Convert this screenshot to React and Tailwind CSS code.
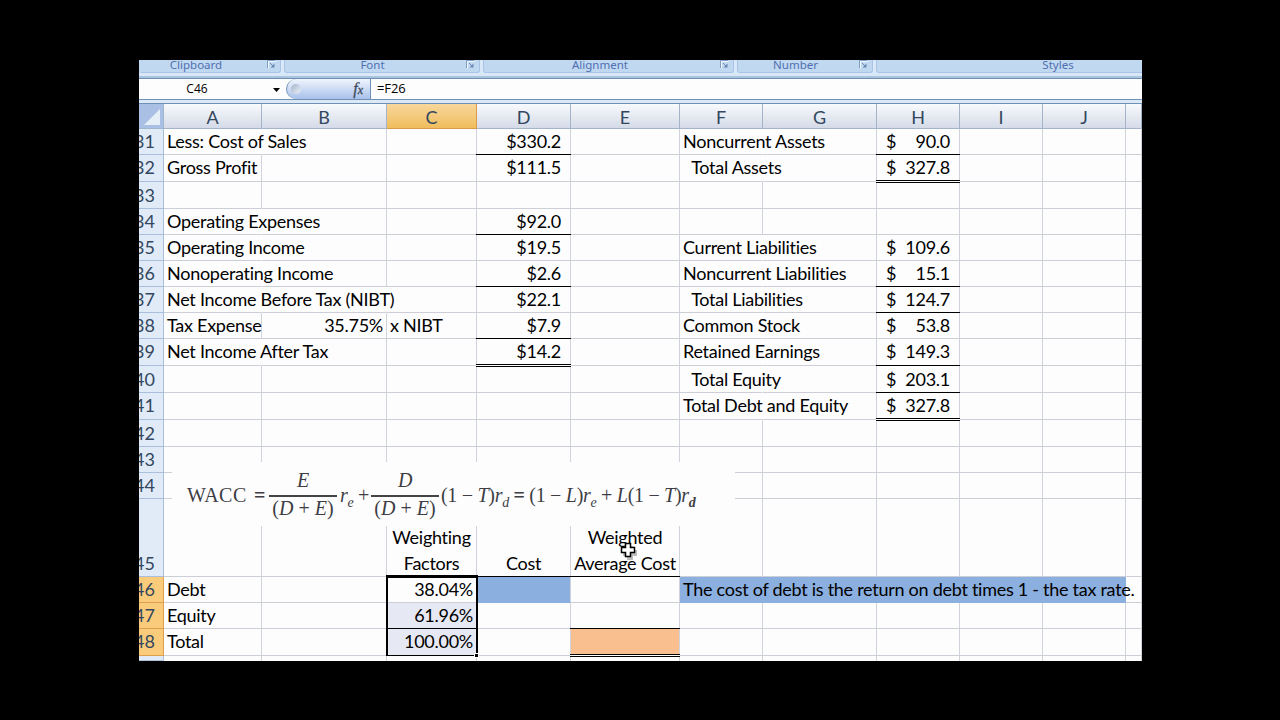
import React from "react";

const COLS = [
  { id: "A", w: "w-[98px]" },
  { id: "B", w: "w-[125px]" },
  { id: "C", w: "w-[90px]" },
  { id: "D", w: "w-[94px]" },
  { id: "E", w: "w-[109px]" },
  { id: "F", w: "w-[83px]" },
  { id: "G", w: "w-[114px]" },
  { id: "H", w: "w-[83px]" },
  { id: "I", w: "w-[83px]" },
  { id: "J", w: "w-[83px]" },
  { id: "K", w: "w-[16px]" },
];

// open: columns whose right gridline is covered by overflowing text
// line / dbl: columns with a single or double bottom border
const ROWS = [
  { n: 31, h: "h-[26px]", open: "AF", line: "DH", A: "Less: Cost of Sales", D: "$330.2", F: "Noncurrent Assets", H: "90.0" },
  { n: 32, h: "h-[27px]", pb: true, open: "F", dbl: "H", A: "Gross Profit", D: "$111.5", F: "  Total Assets", H: "327.8" },
  { n: 33, h: "h-[27px]" },
  { n: 34, h: "h-[26px]", open: "A", line: "D", A: "Operating Expenses", D: "$92.0" },
  { n: 35, h: "h-[26px]", open: "AF", A: "Operating Income", D: "$19.5", F: "Current Liabilities", H: "109.6" },
  { n: 36, h: "h-[26px]", open: "AF", line: "DH", A: "Nonoperating Income", D: "$2.6", F: "Noncurrent Liabilities", H: "15.1" },
  { n: 37, h: "h-[26px]", open: "ABF", line: "H", A: "Net Income Before Tax (NIBT)", D: "$22.1", F: "  Total Liabilities", H: "124.7" },
  { n: 38, h: "h-[26px]", open: "F", line: "D", A: "Tax Expense", B: "35.75%", C: "x NIBT", D: "$7.9", F: "Common Stock", H: "53.8" },
  { n: 39, h: "h-[27px]", pb: true, open: "AF", line: "H", dbl: "D", A: "Net Income After Tax", D: "$14.2", F: "Retained Earnings", H: "149.3" },
  { n: 40, h: "h-[27px]", open: "F", line: "H", F: "  Total Equity", H: "203.1" },
  { n: 41, h: "h-[27px]", pb: true, open: "F", dbl: "H", F: "Total Debt and Equity", H: "327.8" },
  { n: 42, h: "h-[27px]" },
  { n: 43, h: "h-[26px]" },
  { n: 44, h: "h-[26px]" },
  { n: 45, h: "h-[78px]", line: "CDE", C: "Weighting\nFactors", D: "Cost", E: "Weighted\nAverage Cost" },
  { n: 46, h: "h-[26px]", open: "FGHIJ", A: "Debt", C: "38.04%", F: "The cost of debt is the return on debt times 1 - the tax rate." },
  { n: 47, h: "h-[26px]", line: "CE", A: "Equity", C: "61.96%" },
  { n: 48, h: "h-[27px]", pb: true, dbl: "E", A: "Total", C: "100.00%" },
  { n: 49, h: "h-[5px]" },
];

function fillFor(n, col) {
  if (n === 46 && "DFGHIJ".includes(col)) return "bg-[#8bafdf]";
  if (n === 48 && col === "E") return "bg-[#f9bf8f]";
  if ((n === 47 || n === 48) && col === "C") return "bg-[#e6e9f4]";
  return "";
}

function alignFor(n, col) {
  if (n === 45) return "justify-center text-center";
  if (col === "D") return "justify-end pr-[9px]";
  if (col === "B" || (col === "C" && n > 45)) return "justify-end pr-[3px]";
  return "justify-start pl-[3px]";
}

function Cell({ row, col }) {
  const text = row[col.id];
  const has = (key) => (row[key] || "").includes(col.id);
  const rightBorder = has("open") ? "border-r-transparent" : "border-r-[#d0d3dc]";
  const bottom = row.n === 46 && "DFGHIJ".includes(col.id) ? "border-b-[#8bafdf]" : "border-b-[#cdcfd6]";
  const last = row.n === 49 ? "border-b-0" : "border-b";
  const leading = row.n === 45 ? "leading-[26px]" : "leading-[25px]";
  return (
    <div
      className={`relative flex shrink-0 items-end border-r ${last} ${col.w} ${rightBorder} ${bottom} ${fillFor(row.n, col.id)} ${alignFor(row.n, col.id)} ${row.pb ? "pb-px" : ""}`}
    >
      {text && col.id === "H" ? (
        <span className="flex w-full justify-between pl-[6px] pr-[9px] leading-[25px]">
          <span>$</span>
          <span>{text}</span>
        </span>
      ) : (
        text && <span className={`relative z-10 whitespace-pre ${leading}`}>{text}</span>
      )}
      {has("line") && <span className="absolute -left-px right-[-1px] -bottom-px z-10 h-px bg-black" />}
      {has("dbl") && <span className="absolute -left-px right-[-1px] -bottom-[2px] z-10 h-[3px] border-y border-black bg-white" />}
    </div>
  );
}

function Launcher() {
  return (
    <svg width="9" height="9" viewBox="0 0 9 9" fill="none" className="mb-[3px]">
      <path d="M1.5 8.5V1.5H8.5" stroke="#fff" strokeOpacity=".8" />
      <path d="M.5 8V.5H8" stroke="#7d9cc6" />
      <path d="M3 3l3 3" stroke="#6b88b4" />
      <path d="M7.5 3.5v4h-4z" fill="#6b88b4" />
    </svg>
  );
}

function Group({ label, className, launcher, labelClass = "" }) {
  return (
    <div className={`relative flex h-[13px] shrink-0 items-start justify-center rounded-b-[3px] border-x border-b border-[#a9c4e4] bg-[#c1d8f1] ${className}`}>
      <span className={`text-[11.5px] leading-[10px] text-[#4f70b0] ${labelClass}`}>{label}</span>
      {launcher && <span className="absolute bottom-0 right-[4px]"><Launcher /></span>}
    </div>
  );
}

function Ribbon() {
  return (
    <div className="flex h-[16px] gap-[3px] overflow-hidden bg-[#d9e8f8] font-['Noto_Sans']">
      <Group label="Clipboard" className="w-[142px] border-l-0" labelClass="mr-[27px]" launcher />
      <Group label="Font" className="w-[196px]" labelClass="mr-[19px]" launcher />
      <Group label="Alignment" className="w-[251px]" labelClass="mr-[17px]" launcher />
      <Group label="Number" className="w-[136px]" labelClass="mr-[19px]" launcher />
      <Group label="Styles" className="w-[364px]" />
    </div>
  );
}

function FormulaBar() {
  return (
    <div className="flex h-[22px] items-stretch border-y border-[#6f91b5] bg-[#fdfdfe] text-[13px] text-black">
      <div className="relative flex w-[147px] items-center justify-center pr-[31px] font-['Open_Sans']">
        <span className="text-[12px]">C46</span>
        <svg width="7" height="4" viewBox="0 0 7 4" className="absolute right-[6px] top-[9px]">
          <path d="M0 0h7L3.5 4z" fill="#000" />
        </svg>
      </div>
      <div className="flex w-[84px] items-center justify-between rounded-l-full border-l border-[#6f91b5] bg-gradient-to-b from-[#f0f5fd] to-[#a9c1ea] pl-[4px] pr-[7px]">
        <span className="h-[10px] w-[10px] rounded-full bg-gradient-to-br from-[#a3b3c8] to-[#eef3fb]" />
        <span className="font-['Liberation_Serif'] text-[16px] italic leading-none text-[#3e4a5c] [-webkit-text-stroke:0.3px_#3e4a5c]">
          f<span className="text-[12px]">x</span>
        </span>
      </div>
      <div className="flex flex-1 items-center border-l border-[#6f91b5] pl-[6px] font-['Open_Sans'] tracking-[-0.1px]">=F26</div>
    </div>
  );
}

function ColumnHeaders() {
  return (
    <div className="flex h-[25px] shrink-0 text-[18px] text-[#33475e]">
      <div className="flex w-[25px] shrink-0 items-end justify-end border-b border-r border-[#9eb6ce] bg-[#a9c0e4] pb-[3px] pr-[3px]">
        <svg width="16" height="16" viewBox="0 0 16 16"><path d="M16 0v16H0z" fill="#e6eef8" /></svg>
      </div>
      {COLS.map((c) => (
        <div
          key={c.id}
          className={`flex shrink-0 items-center justify-center border-b border-r pt-[3px] ${c.w} ${
            c.id === "C"
              ? "border-[#d99a4a] bg-gradient-to-b from-[#f8d79b] to-[#f0bd5c]"
              : "border-[#a5b3c8] bg-gradient-to-b from-[#f8fafc] to-[#d4dbe8]"
          }`}
        >
          {c.id !== "K" && c.id}
        </div>
      ))}
    </div>
  );
}

function Fraction({ top }) {
  return (
    <span className="flex w-[68px] flex-col items-center">
      <span className="h-[23px] leading-[16px] italic">{top}</span>
      <span className="h-[2px] w-full bg-[#444]" />
      <span className="h-[23px] leading-[23px] tracking-normal">(<i>D</i> + <i>E</i>)</span>
    </span>
  );
}

function Sub({ children }) {
  return <i>r<span className="relative top-[5px] text-[14px]">{children}</span></i>;
}

function Formula() {
  return (
    <div className="absolute left-[33px] top-[402px] z-20 flex h-[64px] w-[563px] items-center whitespace-pre bg-[#fdfdfe] pl-[15px] pt-[4px] font-['Liberation_Serif'] text-[20px] tracking-[-0.3px] text-[#3d3d44]">
      <span className="flex w-[82px] justify-between pb-[3px] pr-[4px]">
        <span className="tracking-[0.5px]">WACC</span>
        <b>=</b>
      </span>
      <Fraction top="E" />
      <span className="w-[34px] pb-[2px] pl-[3px]"><Sub>e</Sub> +</span>
      <Fraction top="D" />
      <span className="pb-[2px] pl-[2px]">
        (1 − <i>T</i>)<Sub>d</Sub> <b>=</b> (1 − <i>L</i>)<Sub>e</Sub> + <i>L</i>(1 − <i>T</i>)<Sub><b>d</b></Sub>
      </span>
    </div>
  );
}

function Sheet() {
  return (
    <div className="font-['Lato'] text-[18px] tracking-[-0.27px] text-black [font-variant-ligatures:none]">
      {ROWS.map((row) => {
        const active = row.n >= 46 && row.n <= 48;
        return (
          <div key={row.n} className={`flex ${row.h}`}>
            <div
              className={`flex w-[25px] shrink-0 items-end justify-end overflow-hidden border-b border-r pr-[8px] tracking-normal text-[#33475e] ${
                active ? "border-[#dfa04d] bg-[#fbcb7c]" : "border-[#a9bfdb] bg-[#e1ebf8]"
              } ${row.pb ? "pb-px" : ""}`}
            >
              {row.n < 49 && <span className="leading-[25px]">{row.n}</span>}
            </div>
            {COLS.map((c) => (
              <Cell key={c.id} row={row} col={c} />
            ))}
          </div>
        );
      })}
    </div>
  );
}

function Selection() {
  return (
    <div className="absolute left-[247px] top-[515px] z-20 h-[81px] w-[92px] border-x-2 border-b border-t-[3px] border-black [border-top-style:double]">
      <span className="absolute -bottom-[3px] -right-[3px] h-[5px] w-[5px] border border-white bg-black" />
    </div>
  );
}

function Cursor() {
  return (
    <svg width="20" height="20" viewBox="0 0 20 20" className="absolute left-[480px] top-[481px] z-30">
      <path d="M8 5h6v4h4v6h-4v4H8v-4H4V9h4z" fill="#000" fillOpacity=".25" />
      <path d="M6.5 2.5h5v4h4v5h-4v4h-5v-4h-4v-5h4z" fill="#fff" stroke="#000" strokeWidth="1.5" />
    </svg>
  );
}

export default function App() {
  return (
    <div className="h-[720px] w-[1280px] overflow-hidden bg-black pl-[139px] pt-[60px]">
      <div className="relative h-[601px] w-[1003px] overflow-hidden bg-[#fdfdfe] font-['Lato']">
        <Ribbon />
        <div className="h-[2px] bg-[#a9c4dc]" />
        <FormulaBar />
        <div className="h-[3px] bg-[#dbe9f7]" />
        <div className="h-px bg-[#6f91b5]" />
        <ColumnHeaders />
        <Sheet />
        <Formula />
        <Selection />
        <Cursor />
      </div>
    </div>
  );
}
